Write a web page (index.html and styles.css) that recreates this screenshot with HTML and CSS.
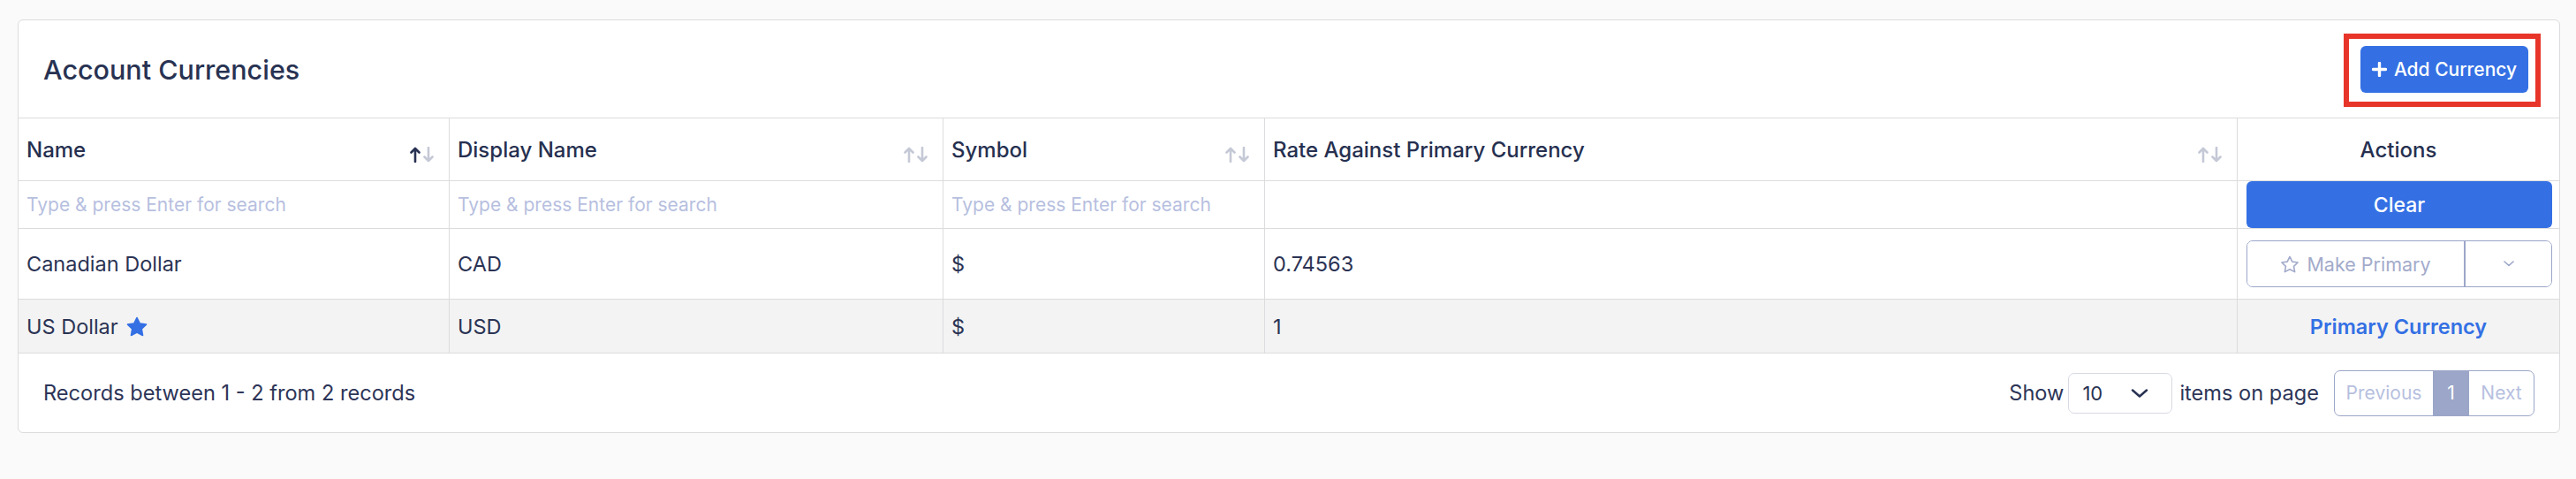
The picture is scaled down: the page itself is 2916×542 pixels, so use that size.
FILE: index.html
```html
<!DOCTYPE html>
<html lang="en">
<head>
<meta charset="utf-8">
<title>Account Currencies</title>
<link rel="stylesheet" href="styles.css">
</head>
<body>
<div class="page">
  <div class="card">
    <div class="card-header">
      <h1 class="title">Account Currencies</h1>
      <div class="add-wrap">
        <button class="btn-primary add-btn">
          <svg class="plus" width="17" height="17" viewBox="0 0 17 17"><path d="M8.5 1.5v14M1.5 8.5h14" stroke="#fff" stroke-width="3.4" stroke-linecap="round"/></svg>
          <span>Add Currency</span>
        </button>
        <span class="annot"></span>
      </div>
    </div>
    <table class="grid">
      <colgroup>
        <col class="c1"><col class="c2"><col class="c3"><col class="c4"><col class="c5">
      </colgroup>
      <thead>
        <tr class="head-row">
          <th><div class="th-inner"><span>Name</span>
            <svg class="sort" width="28" height="18" viewBox="0 0 28 18"><g fill="none" stroke-width="2.6" stroke-linecap="round" stroke-linejoin="round"><path d="M6 17V2M1.5 6.5L6 2l4.5 4.5" stroke="#283252"/><path d="M21 1v15M16.5 11.5L21 16l4.5-4.5" stroke="#c5c9d6"/></g></svg></div></th>
          <th><div class="th-inner"><span>Display Name</span>
            <svg class="sort" width="28" height="18" viewBox="0 0 28 18"><g fill="none" stroke-width="2.6" stroke-linecap="round" stroke-linejoin="round" stroke="#c5c9d6"><path d="M6 17V2M1.5 6.5L6 2l4.5 4.5"/><path d="M21 1v15M16.5 11.5L21 16l4.5-4.5"/></g></svg></div></th>
          <th><div class="th-inner"><span>Symbol</span>
            <svg class="sort" width="28" height="18" viewBox="0 0 28 18"><g fill="none" stroke-width="2.6" stroke-linecap="round" stroke-linejoin="round" stroke="#c5c9d6"><path d="M6 17V2M1.5 6.5L6 2l4.5 4.5"/><path d="M21 1v15M16.5 11.5L21 16l4.5-4.5"/></g></svg></div></th>
          <th><div class="th-inner"><span>Rate Against Primary Currency</span>
            <svg class="sort" width="28" height="18" viewBox="0 0 28 18"><g fill="none" stroke-width="2.6" stroke-linecap="round" stroke-linejoin="round" stroke="#c5c9d6"><path d="M6 17V2M1.5 6.5L6 2l4.5 4.5"/><path d="M21 1v15M16.5 11.5L21 16l4.5-4.5"/></g></svg></div></th>
          <th class="th-actions">Actions</th>
        </tr>
        <tr class="filter-row">
          <td><input class="filter" type="text" placeholder="Type &amp; press Enter for search"></td>
          <td><input class="filter" type="text" placeholder="Type &amp; press Enter for search"></td>
          <td><input class="filter" type="text" placeholder="Type &amp; press Enter for search"></td>
          <td></td>
          <td class="actions-cell"><button class="btn-primary clear-btn">Clear</button></td>
        </tr>
      </thead>
      <tbody>
        <tr class="row row-1">
          <td>Canadian Dollar</td>
          <td>CAD</td>
          <td>$</td>
          <td>0.74563</td>
          <td class="actions-cell">
            <div class="btn-group">
              <button class="bg-main">
                <svg width="22" height="20" viewBox="0 0 24 22"><polygon points="12,1.5 15.1,7.8 22,8.8 17,13.6 18.2,20.5 12,17.3 5.8,20.5 7,13.6 2,8.8 8.9,7.8" fill="none" stroke="#a3abcb" stroke-width="1.8" stroke-linejoin="round"/></svg>
                <span>Make Primary</span>
              </button>
              <button class="bg-toggle">
                <svg width="12" height="7" viewBox="0 0 12 7"><path d="M1 1l5 4.5L11 1" fill="none" stroke="#9ba6c8" stroke-width="1.6" stroke-linecap="round" stroke-linejoin="round"/></svg>
              </button>
            </div>
          </td>
        </tr>
        <tr class="row row-alt">
          <td><span class="name-star">US Dollar<svg class="star-fill" width="26" height="23" viewBox="0 0 24 22"><polygon points="12,1.5 15.1,7.8 22,8.8 17,13.6 18.2,20.5 12,17.3 5.8,20.5 7,13.6 2,8.8 8.9,7.8" fill="#3470e4" stroke="#3470e4" stroke-width="1.6" stroke-linejoin="round"/></svg></span></td>
          <td>USD</td>
          <td>$</td>
          <td>1</td>
          <td class="primary-label">Primary Currency</td>
        </tr>
      </tbody>
    </table>
    <div class="card-footer">
      <div class="records">Records between 1 - 2 from 2 records</div>
      <div class="footer-right">
        <span>Show</span>
        <div class="select">
          <span>10</span>
          <svg width="20" height="10" viewBox="0 0 20 10"><path d="M2 1.5l8 7 8-7" fill="none" stroke="#283252" stroke-width="2.5" stroke-linecap="round" stroke-linejoin="round"/></svg>
        </div>
        <span class="items-label">items on page</span>
        <div class="pager">
          <span class="pg pg-prev">Previous</span>
          <span class="pg pg-active">1</span>
          <span class="pg pg-next">Next</span>
        </div>
      </div>
    </div>
  </div>
</div>
</body>
</html>
```
FILE: styles.css
```css
html, body {
  margin: 0;
  background: #fafafa;
}
body {
  font-family: Inter, "Noto Sans", sans-serif;
  color: #2b3354;
}
.page {
  padding: 22px 18px 30px 20px;
}
.card {
  background: #fff;
  border: 1px solid #dcdcdf;
  border-radius: 6px;
}
.card-header {
  height: 111px;
  box-sizing: border-box;
  border-bottom: 1px solid #dcdcdf;
  display: flex;
  align-items: center;
  justify-content: space-between;
  padding: 0 35px 0 28px;
}
.title {
  margin: 0;
  font-size: 30.5px;
  font-weight: 500;
  color: #283252;
}
.add-wrap {
  position: relative;
  display: flex;
}
.annot {
  position: absolute;
  left: -19px;
  top: -14px;
  right: -14px;
  bottom: -16px;
  border: 6px solid #e8352a;
  pointer-events: none;
}
.btn-primary {
  background: #3470e4;
  color: #fff;
  border: 0;
  border-radius: 6px;
  font-family: inherit;
  cursor: pointer;
}
.add-btn {
  width: 190px;
  height: 53px;
  display: flex;
  align-items: center;
  justify-content: center;
  gap: 8px;
  font-size: 21px;
  font-weight: 500;
  padding: 0;
}
.grid {
  width: 100%;
  border-collapse: separate;
  border-spacing: 0;
  table-layout: fixed;
}
.c1 { width: 488px; }
.c2 { width: 559px; }
.c3 { width: 364px; }
.c4 { width: 1101px; }
.grid th,
.grid td {
  border-right: 1px solid #dcdcdf;
  border-bottom: 1px solid #dcdcdf;
  padding: 0 16px 0 9px;
  box-sizing: border-box;
  text-align: left;
  vertical-align: middle;
}
.grid th:last-child,
.grid td:last-child {
  border-right: 0;
}
.head-row th {
  height: 71px;
  font-size: 24px;
  font-weight: 500;
  color: #263050;
}
.th-inner {
  display: flex;
  align-items: center;
  justify-content: space-between;
}
.sort {
  margin-top: 12px;
  flex: none;
}
.grid th.th-actions {
  text-align: center;
  padding: 0;
}
.filter-row td {
  height: 54px;
}
.filter {
  border: 0;
  outline: 0;
  background: transparent;
  width: 100%;
  padding: 0;
  font-family: inherit;
  font-size: 21px;
  color: #2b3354;
}
.filter::placeholder {
  color: #b7bfdf;
}
.grid td.actions-cell {
  padding: 0 8px 0 10px;
}
.clear-btn {
  display: block;
  width: 100%;
  height: 53px;
  font-size: 23px;
  font-weight: 500;
}
.row td {
  font-size: 23.5px;
  color: #2b3354;
}
.row-1 td {
  height: 80px;
}
.row-alt td {
  height: 61px;
  background: #f3f3f3;
}
.name-star {
  display: inline-flex;
  align-items: center;
}
.star-fill {
  margin-left: 8px;
}
.grid td.primary-label {
  text-align: center;
  padding: 0;
  color: #3470e4;
  font-weight: 600;
}
.btn-group {
  display: flex;
  height: 53px;
  box-sizing: border-box;
  border: 1.5px solid #9ba6c8;
  border-radius: 7px;
  overflow: hidden;
}
.btn-group button {
  border: 0;
  background: #fff;
  font-family: inherit;
  padding: 0;
  display: flex;
  align-items: center;
  justify-content: center;
}
.bg-main {
  width: 247px;
  gap: 8px;
  font-size: 21.5px;
  color: #a3abcb;
  border-right: 2px solid #9ba6c8 !important;
}
.bg-toggle {
  flex: 1;
}
.card-footer {
  height: 89px;
  display: flex;
  align-items: center;
  justify-content: space-between;
  padding: 0 28px;
  font-size: 23.6px;
  color: #2d3558;
}
.footer-right {
  display: flex;
  align-items: center;
}
.select {
  margin-left: 5px;
  width: 118px;
  height: 46px;
  box-sizing: border-box;
  border: 1px solid #d8dae3;
  border-radius: 7px;
  display: flex;
  align-items: center;
  justify-content: space-between;
  padding: 0 26px 0 15px;
  font-size: 22px;
  color: #283252;
}
.items-label {
  margin-left: 8px;
}
.pager {
  margin-left: 17px;
  display: flex;
  height: 52px;
  box-sizing: border-box;
  border: 1.5px solid #9ba6c8;
  border-radius: 7px;
  overflow: hidden;
  font-size: 21px;
  color: #b7bfdf;
}
.pg {
  display: flex;
  align-items: center;
  justify-content: center;
}
.pg-prev { width: 111px; }
.pg-active {
  width: 41px;
  background: #9ba6c8;
  color: #fff;
}
.pg-next { width: 73px; }
```
